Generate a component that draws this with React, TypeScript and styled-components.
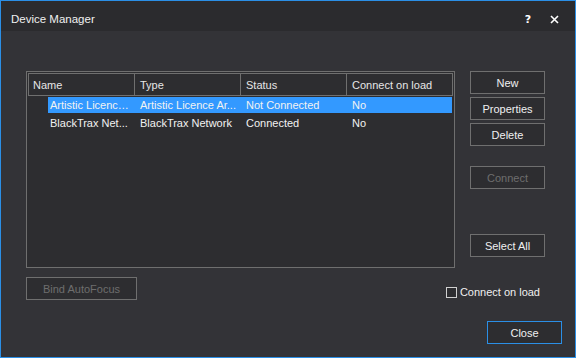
import { FC } from "react";
import styled, { createGlobalStyle } from "styled-components";

const GlobalStyle = createGlobalStyle`
    html, body {
        margin: 0;
        padding: 0;
        background: #333337;
    }
    * {
        box-sizing: border-box;
    }
`

const Window = styled.div`
    width: 576px;
    height: 358px;
    border: 1px solid #2b8fe6;
    background: #333337;
    display: flex;
    flex-direction: column;
    font-family: "Liberation Sans", Arial, sans-serif;
    font-size: 11px;
    color: #e6e6e6;
`

const TitleBar = styled.div`
    height: 30px;
    background: #2b2b2e;
    display: flex;
    align-items: center;
    padding: 6px 0 0 10px;
    flex-shrink: 0;

    & .title {
        font-size: 11.5px;
        color: #f0f0f0;
        margin-right: auto;
    }
`

const TitleIcon = styled.div<{ $width: number }>`
    width: ${({ $width }) => $width}px;
    height: 20px;
    display: flex;
    align-items: center;
    justify-content: center;
    font-family: "DejaVu Sans", sans-serif;
    font-weight: bold;
    font-size: 11px;
    color: #ffffff;
`

const Body = styled.div`
    flex: 1;
    display: flex;
    flex-direction: column;
    padding: 40px 13px 13px 25px;
`

const TopRow = styled.div`
    display: flex;
    gap: 15px;
`

const ListView = styled.div`
    width: 429px;
    height: 197px;
    border: 1px solid #6f6f6f;
    padding: 1px;
    background: #2d2d30;
`

const Columns = `
    display: grid;
    grid-template-columns: 106px 106px 106px 106px;
`

const HeaderRow = styled.div`
    ${Columns}
    height: 23px;
`

const HeaderCell = styled.div<{ $pad: number }>`
    border: 1px solid #6f6f6f;
    margin-right: -1px;
    display: flex;
    align-items: center;
    padding-left: ${({ $pad }) => $pad}px;
    color: #e6e6e6;
`

const Row = styled.div`
    ${Columns}
    height: 17px;
    margin-top: 1px;
`

const Cell = styled.div<{ $selected: boolean; $pad: number; $indent?: number }>`
    margin-left: ${({ $indent }) => $indent ?? 0}px;
    padding-left: ${({ $pad }) => $pad}px;
    padding-right: 2px;
    background: ${({ $selected }) => ($selected ? "#3399ff" : "transparent")};
    color: #f2f2f2;
    line-height: 16px;
    height: 16px;
    white-space: nowrap;
    overflow: hidden;
    text-overflow: ellipsis;
`

const ButtonColumn = styled.div`
    width: 75px;
    display: flex;
    flex-direction: column;
    gap: 3px;
`

const Button = styled.button<{ $width?: number; $disabled?: boolean; $focused?: boolean; $gap?: number }>`
    width: ${({ $width }) => $width ?? 75}px;
    height: 23px;
    margin-top: ${({ $gap }) => $gap ?? 0}px;
    background: #2d2d30;
    border: 1px solid ${({ $focused }) => ($focused ? "#2b8fe6" : "#6f6f6f")};
    color: ${({ $disabled }) => ($disabled ? "#6e6e6e" : "#f0f0f0")};
    font-family: "Liberation Sans", Arial, sans-serif;
    font-size: 11px;
    padding: 0;
    flex-shrink: 0;
`

const MidRow = styled.div`
    display: flex;
    margin-top: 9px;
`

const CheckRow = styled.label`
    display: flex;
    align-items: center;
    gap: 3px;
    margin: 9px 22px 0 auto;
    height: 12px;
    color: #f0f0f0;
    font-size: 11px;
`

const CheckBox = styled.span`
    width: 11px;
    height: 11px;
    border: 1px solid #d0d0d0;
    background: #2d2d30;
`

const Footer = styled.div`
    display: flex;
    justify-content: flex-end;
    margin-top: auto;
`

const devices = [
    { name: "Artistic Licence...", type: "Artistic Licence Ar...", status: "Not Connected", load: "No", selected: true },
    { name: "BlackTrax Net...", type: "BlackTrax Network", status: "Connected", load: "No", selected: false },
]

const App: FC = () => {
    return (
        <>
            <GlobalStyle />
            <Window>
                <TitleBar>
                    <span className="title">Device Manager</span>
                    <TitleIcon $width={10}>?</TitleIcon>
                    <TitleIcon $width={42}>
                        <svg width="9" height="9" viewBox="0 0 9 9">
                            <path d="M1 1 L8 8 M8 1 L1 8" stroke="#ffffff" strokeWidth="1.6" />
                        </svg>
                    </TitleIcon>
                </TitleBar>
                <Body>
                    <TopRow>
                        <ListView>
                            <HeaderRow>
                                <HeaderCell $pad={4}>Name</HeaderCell>
                                <HeaderCell $pad={5}>Type</HeaderCell>
                                <HeaderCell $pad={5}>Status</HeaderCell>
                                <HeaderCell $pad={5}>Connect on load</HeaderCell>
                            </HeaderRow>
                            {devices.map((d) => (
                                <Row key={d.name}>
                                    <Cell $selected={d.selected} $pad={2} $indent={20}>{d.name}</Cell>
                                    <Cell $selected={d.selected} $pad={6}>{d.type}</Cell>
                                    <Cell $selected={d.selected} $pad={6}>{d.status}</Cell>
                                    <Cell $selected={d.selected} $pad={6}>{d.load}</Cell>
                                </Row>
                            ))}
                        </ListView>
                        <ButtonColumn>
                            <Button>New</Button>
                            <Button>Properties</Button>
                            <Button>Delete</Button>
                            <Button $disabled $gap={17}>Connect</Button>
                            <Button $gap={42}>Select All</Button>
                        </ButtonColumn>
                    </TopRow>
                    <MidRow>
                        <Button $width={111} $disabled>Bind AutoFocus</Button>
                        <CheckRow>
                            <CheckBox />
                            Connect on load
                        </CheckRow>
                    </MidRow>
                    <Footer>
                        <Button $focused>Close</Button>
                    </Footer>
                </Body>
            </Window>
        </>
    )
}

export default App
